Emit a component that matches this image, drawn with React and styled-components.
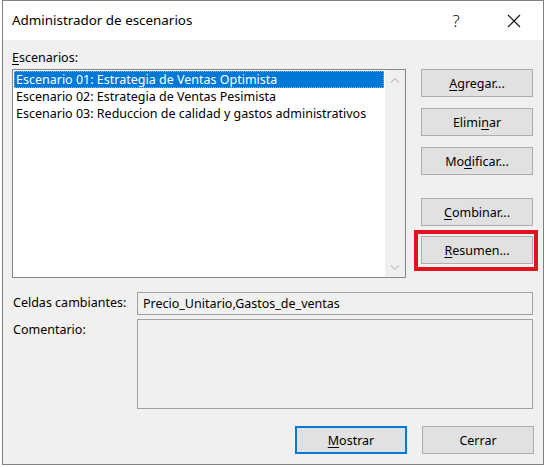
import React from "react";
import styled, { createGlobalStyle } from "styled-components";

const Global = createGlobalStyle`
  html, body { margin: 0; padding: 0; background: #ffffff; }
  body { font-family: "Segoe UI", "Noto Sans", "Open Sans", sans-serif; }
`;

const Window = styled.div`
  margin-left: 2px;
  width: 540px;
  height: 463px;
  border: 1px solid #7f7f7f;
  display: flex;
  flex-direction: column;
  background: #f0f0f0;
  font-size: 12.5px;
  color: #000;
`;

const TitleBar = styled.div`
  height: 39px;
  background: #ffffff;
  display: flex;
  align-items: center;
  padding: 0 6px 0 9px;
`;

const Title = styled.div`
  flex: 1;
  font-size: 13.4px;
  color: #000;
  padding-bottom: 1px;
`;

const TitleBtn = styled.div`
  width: 46px;
  height: 39px;
  display: flex;
  align-items: center;
  justify-content: center;
  font-size: 17px;
  font-weight: 300;
  color: #111;
  margin-right: ${(p) => p.$mr || 0}px;
`;

const Content = styled.div`
  flex: 1;
  display: flex;
  flex-direction: column;
  padding: 9px 9px 10px 9px;
`;

const Top = styled.div`
  display: flex;
  gap: 15px;
`;

const LeftCol = styled.div`
  display: flex;
  flex-direction: column;
`;

const Label = styled.div`
  height: 20px;
  line-height: 18px;
  white-space: nowrap;
`;

const U = styled.span`
  text-decoration: underline;
  text-underline-offset: 2px;
`;

const ListBox = styled.div`
  width: 392px;
  height: 207px;
  border: 1px solid #828790;
  background: #fff;
  display: flex;
`;

const Items = styled.div`
  flex: 1;
  padding: 1px 1px 0 1px;
`;

const Item = styled.div`
  height: 17px;
  line-height: 15px;
  white-space: nowrap;
  box-sizing: border-box;
  color: ${(p) => (p.$sel ? "#fff" : "#000")};
  background: ${(p) => (p.$sel ? "#0078d7" : "transparent")};
  border: 1px dotted ${(p) => (p.$sel ? "#7fb4e6" : "transparent")};
  padding-left: 1px;
`;

const ScrollBar = styled.div`
  width: 20px;
  background: #f0f0f0;
  display: flex;
  flex-direction: column;
  justify-content: space-between;
  align-items: center;
  padding: 7px 0 6px;
`;

const Buttons = styled.div`
  display: flex;
  flex-direction: column;
`;

const Btn = styled.button`
  width: 112px;
  height: 28px;
  box-sizing: border-box;
  background: #e1e1e1;
  border: ${(p) => (p.$def ? "2px solid #0078d7" : "1px solid #adadad")};
  font-family: inherit;
  font-size: 12.5px;
  color: #000;
  padding: 0;
  margin-top: ${(p) => p.$mt || 0}px;
  position: relative;
`;

const Highlight = styled.span`
  position: absolute;
  left: -8px;
  right: -6px;
  top: -7px;
  bottom: -8px;
  border: 4px solid #e0141e;
  pointer-events: none;
`;

const Form = styled.div`
  display: grid;
  grid-template-columns: 125px 396px;
  row-gap: 4px;
  margin-top: 14px;
`;

const FieldLabel = styled.div`
  line-height: 22px;
  padding-left: 1px;
`;

const Field = styled.div`
  height: ${(p) => p.$h}px;
  box-sizing: border-box;
  border: 1px solid #a0a0a0;
  background: #f0f0f0;
  padding: 0 5px;
  line-height: 21px;
  white-space: nowrap;
`;

const Footer = styled.div`
  margin-top: auto;
  display: flex;
  justify-content: flex-end;
  gap: 15px;
`;

const Chevron = ({ up }) => (
  <svg width="10" height="6" viewBox="0 0 10 6">
    <path
      d={up ? "M1 5.5 L5 1.5 L9 5.5" : "M1 0.5 L5 4.5 L9 0.5"}
      fill="none"
      stroke="#c2c2c2"
      strokeWidth="1.2"
    />
  </svg>
);

export default function App() {
  return (
    <>
      <Global />
      <Window>
        <TitleBar>
          <Title>Administrador de escenarios</Title>
          <TitleBtn $mr={12}>?</TitleBtn>
          <TitleBtn>
            <svg width="14" height="14" viewBox="0 0 14 14">
              <path d="M1 1 L13 13 M13 1 L1 13" stroke="#111" strokeWidth="1.1" />
            </svg>
          </TitleBtn>
        </TitleBar>
        <Content>
          <Top>
            <LeftCol>
              <Label>
                <U>E</U>scenarios:
              </Label>
              <ListBox>
                <Items>
                  <Item $sel>Escenario 01: Estrategia de Ventas Optimista</Item>
                  <Item>Escenario 02: Estrategia de Ventas Pesimista</Item>
                  <Item>Escenario 03: Reduccion de calidad y gastos administrativos</Item>
                </Items>
                <ScrollBar>
                  <Chevron up />
                  <Chevron />
                </ScrollBar>
              </ListBox>
            </LeftCol>
            <Buttons>
              <Btn $mt={20}>
                <U>A</U>gregar...
              </Btn>
              <Btn $mt={11}>
                Elimi<U>n</U>ar
              </Btn>
              <Btn $mt={11}>
                Mo<U>d</U>ificar...
              </Btn>
              <Btn $mt={23}>
                <U>C</U>ombinar...
              </Btn>
              <Btn $mt={10}>
                <U>R</U>esumen...
                <Highlight />
              </Btn>
            </Buttons>
          </Top>
          <Form>
            <FieldLabel>Celdas cambiantes:</FieldLabel>
            <Field $h={23}>Precio_Unitario,Gastos_de_ventas</Field>
            <FieldLabel>Comentario:</FieldLabel>
            <Field $h={90} />
          </Form>
          <Footer>
            <Btn $def>
              <U>M</U>ostrar
            </Btn>
            <Btn>Cerrar</Btn>
          </Footer>
        </Content>
      </Window>
    </>
  );
}
